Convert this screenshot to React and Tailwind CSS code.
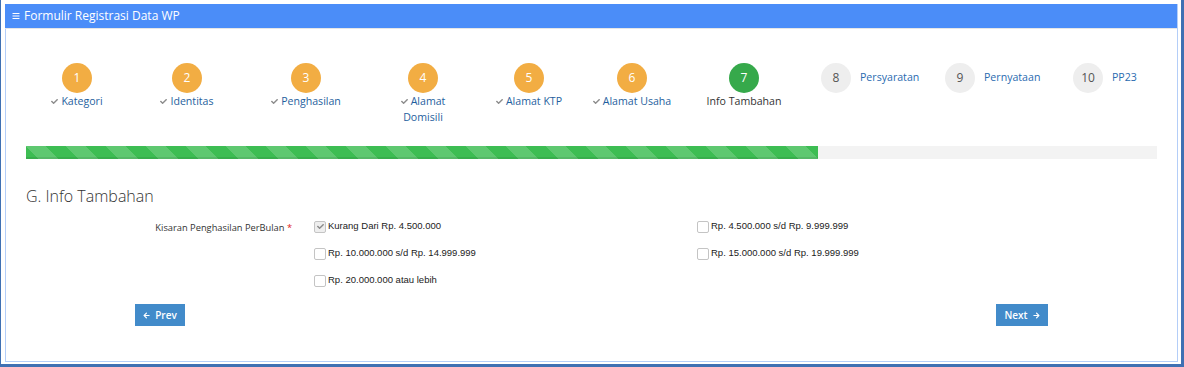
import React from "react";
import { FaBars, FaCheck, FaArrowLeft, FaArrowRight } from "react-icons/fa";

const doneSteps = [
  { n: 1, label: "Kategori", w: "w-[102px]" },
  { n: 2, label: "Identitas", w: "w-[118px]" },
  { n: 3, label: "Penghasilan", w: "w-[120px]" },
  { n: 4, label: "Alamat Domisili", w: "w-[114px]", narrow: true },
  { n: 5, label: "Alamat KTP", w: "w-[98px]" },
  { n: 6, label: "Alamat Usaha", w: "w-[108px]" },
];

const nextSteps = [
  { n: 8, label: "Persyaratan", w: "w-[124px]" },
  { n: 9, label: "Pernyataan", w: "w-[128px]" },
  { n: 10, label: "PP23", w: "w-[80px]" },
];

const options = [
  { text: "Kurang Dari Rp. 4.500.000", checked: true },
  { text: "Rp. 4.500.000 s/d Rp. 9.999.999" },
  { text: "Rp. 10.000.000 s/d Rp. 14.999.999" },
  { text: "Rp. 15.000.000 s/d Rp. 19.999.999" },
  { text: "Rp. 20.000.000 atau lebih" },
];

function Checkbox({ checked }) {
  return (
    <span
      className={
        "flex h-[12px] w-[12px] shrink-0 items-center justify-center rounded-[2px] border border-[#c4c4c4] " +
        (checked ? "bg-[#eeeeee]" : "bg-white")
      }
    >
      {checked && <FaCheck className="text-[#8a8a8a]" size={7} />}
    </span>
  );
}

export default function App() {
  return (
    <div className="h-[367px] w-[1184px] border-b-[3px] border-l border-r-[3px] border-[#3f70b3] bg-white pb-[2px] pl-[4px] pr-[3px] pt-[4px] font-['Open_Sans',sans-serif]">
      <div className="flex h-full flex-col border border-t-0 border-[#b4cef8]">
        {/* header */}
        <div className="-ml-px flex h-[25px] items-center gap-[4px] border-b border-[#e6e6e6] bg-[#4b8df8] pl-[7px] text-[12px] text-white">
          <FaBars size={8} />
          <span>Formulir Registrasi Data WP</span>
        </div>

        <div className="px-[20px]">
          {/* wizard steps */}
          <div className="mt-[34px] flex">
            {doneSteps.map((s) => (
              <div key={s.n} className={"flex flex-col items-center " + s.w}>
                <div className="flex h-[30px] w-[30px] items-center justify-center rounded-full bg-[#f2ad43] text-[12px] text-white">
                  {s.n}
                </div>
                <div
                  className={
                    "text-center text-[10.6px] leading-[16px] text-[#1f5f9e] " +
                    (s.narrow ? "w-[60px]" : "")
                  }
                >
                  <FaCheck className="mr-[3px] inline align-[0px] text-[#8c8c8c]" size={7} />
                  {s.label}
                </div>
              </div>
            ))}
            <div className="flex w-[116px] flex-col items-center">
              <div className="flex h-[30px] w-[30px] items-center justify-center rounded-full bg-[#36a94b] text-[12px] text-white">
                7
              </div>
              <div className="text-[10.6px] leading-[16px] text-[#333]">Info Tambahan</div>
            </div>
            <div className="ml-[19px] flex">
              {nextSteps.map((s) => (
                <div key={s.n} className={"flex h-[30px] items-center gap-[9px] " + s.w}>
                  <div className="flex h-[30px] w-[30px] items-center justify-center rounded-full bg-[#eeeeee] text-[12px] text-[#555]">
                    {s.n}
                  </div>
                  <span className="text-[10.6px] text-[#2a6bb0]">{s.label}</span>
                </div>
              ))}
            </div>
          </div>

          {/* progress */}
          <div className="mt-[21px] h-[13px] w-full bg-[#f3f3f3]">
            <div className="h-full w-[70%] bg-[#3dbd53] bg-[linear-gradient(45deg,rgba(255,255,255,.17)_25%,transparent_25%,transparent_50%,rgba(255,255,255,.17)_50%,rgba(255,255,255,.17)_75%,transparent_75%,transparent)] bg-[length:40px_40px] shadow-[inset_0_-2px_0_rgba(0,0,0,0.08)]" />
          </div>

          <h3 className="mt-[25px] text-[16px] font-light leading-[24px] text-[#333]">
            G. Info Tambahan
          </h3>

          {/* form */}
          <div className="mt-[5px] flex">
            <div className="w-[269px] pt-[1px] pr-[3px] text-right text-[9.3px] leading-[27px] text-[#333]">
              Kisaran Penghasilan PerBulan <span className="text-[#e02222]">*</span>
            </div>
            <div className="ml-[19px] grid grid-cols-[383px_383px]">
              {options.map((o) => (
                <label
                  key={o.text}
                  className="flex h-[27px] items-center gap-[2px] font-['Liberation_Sans',sans-serif] text-[9.5px] text-[#222]"
                >
                  <Checkbox checked={o.checked} />
                  <span>{o.text}</span>
                </label>
              ))}
            </div>
          </div>

          {/* buttons */}
          <div className="mt-[10px] flex justify-between px-[109px]">
            <button className="flex h-[22px] w-[50px] items-center justify-center gap-[5px] bg-[#428bca] text-[10px] font-semibold text-white">
              <FaArrowLeft size={7} />
              Prev
            </button>
            <button className="flex h-[22px] w-[52px] items-center justify-center gap-[5px] bg-[#428bca] text-[10px] font-semibold text-white">
              Next
              <FaArrowRight size={7} />
            </button>
          </div>
        </div>
      </div>
    </div>
  );
}
